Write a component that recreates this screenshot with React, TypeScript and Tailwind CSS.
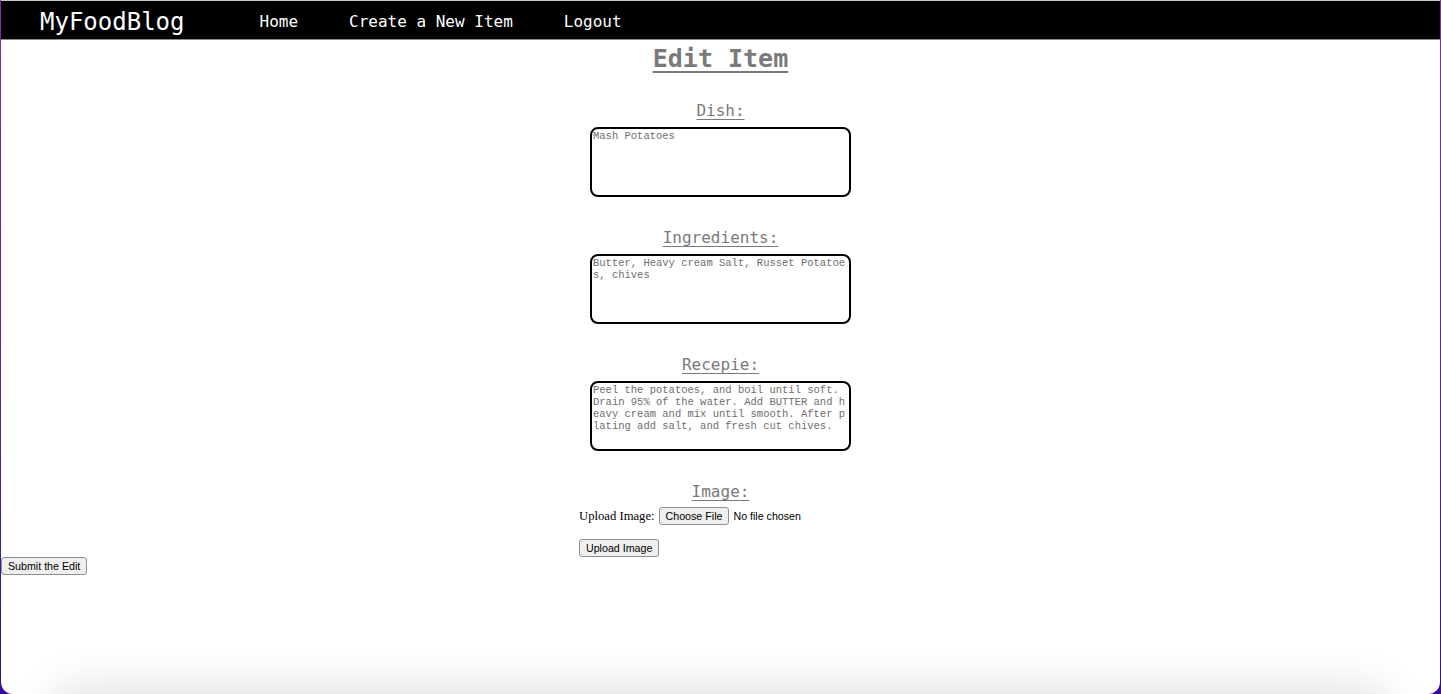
import React from "react";

const mono = { fontFamily: '"DejaVu Sans Mono", "Liberation Mono", monospace' };

function Field({ label, value }: { label: string; value: string }) {
  return (
    <div className="flex flex-col items-center">
      <label
        className="text-[16px] leading-[19px] text-[#7a7a7a] underline underline-offset-[3px] mt-[31px]"
        style={mono}
      >
        {label}
      </label>
      <textarea
        className="mt-[7px] w-[261px] h-[70px] border-2 border-black rounded-[8px] px-[1px] py-[1px] text-[10.5px] leading-[12px] break-all resize-none text-[#6e6e6e] outline-none"
        style={{ fontFamily: '"Liberation Mono", monospace' }}
        defaultValue={value}
      />
    </div>
  );
}

const btn =
  "bg-[#efefef] border border-[#8f8f8f] rounded-[3px] px-[6px] h-[18px] text-[10.67px] leading-[16px] text-black";
const sans = { fontFamily: '"Liberation Sans", Arial, sans-serif' };

export default function App() {
  return (
    <div className="h-[694px] w-[1441px] bg-gradient-to-b from-[#8c2aa6] to-[#3a08a0] px-px overflow-hidden">
      <div className="h-full bg-white rounded-b-[12px] flex flex-col overflow-hidden">
        <nav
          className="h-[40px] pt-[4px] bg-black border-t border-[#c8c8c8] border-b border-b-[#8a8a8a] flex items-center text-white shrink-0"
          style={mono}
        >
          <span className="ml-[39px] text-[24px] leading-none">MyFoodBlog</span>
          <span className="ml-[75px] text-[16px]">Home</span>
          <span className="ml-[51px] text-[16px]">Create a New Item</span>
          <span className="ml-[51px] text-[16px]">Logout</span>
        </nav>

        <h1
          className="mt-[4px] text-center text-[25px] leading-[30px] font-bold text-[#7a7a7a] underline underline-offset-[4px]"
          style={mono}
        >
          Edit Item
        </h1>

        <div className="-mt-[4px]">
          <Field label="Dish:" value="Mash Potatoes" />
        </div>
        <Field
          label="Ingredients:"
          value="Butter, Heavy cream Salt, Russet Potatoes, chives"
        />
        <Field
          label="Recepie:"
          value="Peel the potatoes, and boil until soft. Drain 95% of the water. Add BUTTER and heavy cream and mix until smooth. After plating add salt, and fresh cut chives."
        />

        <div className="flex flex-col items-center">
          <span
            className="text-[16px] leading-[19px] text-[#7a7a7a] underline underline-offset-[3px] mt-[31px]"
            style={mono}
          >
            Image:
          </span>
          <div className="w-[282px] -ml-[1px]">
            <div className="flex items-center mt-[6px] h-[18px]">
              <span
                className="text-[12.67px] text-black"
                style={{ fontFamily: '"Liberation Serif", "Times New Roman", serif' }}
              >
                Upload Image:
              </span>
              <button className={btn + " ml-[4px]"} style={sans}>
                Choose File
              </button>
              <span className="ml-[4px] text-[10.67px] text-black" style={sans}>
                No file chosen
              </span>
            </div>
            <button className={btn + " mt-[14px] block"} style={sans}>
              Upload Image
            </button>
          </div>
        </div>

        <div className="flex">
          <button className={btn} style={sans}>
            Submit the Edit
          </button>
        </div>

        <div className="mt-auto mx-[70px] h-[20px] translate-y-[34px] shadow-[0_0_45px_20px_rgba(0,0,0,0.13)] rounded-[30px]" />
      </div>
    </div>
  );
}
